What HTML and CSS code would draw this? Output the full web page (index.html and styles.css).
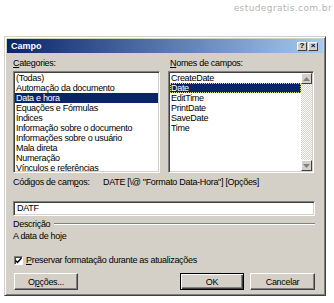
FILE: index.html
```html
<!DOCTYPE html>
<html lang="pt">
<head>
    <meta charset="UTF-8">
    <title>Campo</title>
    <link rel="stylesheet" href="styles.css">
</head>
<body>
    <div class="watermark">estudegratis.com.br</div>

    <div class="dialog">
        <div class="titlebar">
            <span class="title">Campo</span>
            <div class="title-buttons">
                <span class="tbtn">?</span>
                <span class="tbtn">&#215;</span>
            </div>
        </div>

        <div class="content">
            <div class="lists">
                <div class="col">
                    <div class="label"><u>C</u>ategories:</div>
                    <div class="listbox">
                        <div class="item">(Todas)</div>
                        <div class="item">Automação da documento</div>
                        <div class="item selected">Data e hora</div>
                        <div class="item">Equações e Fórmulas</div>
                        <div class="item">Índices</div>
                        <div class="item">Informação sobre o documento</div>
                        <div class="item">Informações sobre o usuário</div>
                        <div class="item">Mala direta</div>
                        <div class="item">Numeração</div>
                        <div class="item">Vínculos e referências</div>
                    </div>
                </div>
                <div class="col">
                    <div class="label label-right"><u>N</u>omes de campos:</div>
                    <div class="listbox listbox-scroll">
                        <div class="items">
                            <div class="item">CreateDate</div>
                            <div class="item selected focused">Date</div>
                            <div class="item">EditTime</div>
                            <div class="item">PrintDate</div>
                            <div class="item">SaveDate</div>
                            <div class="item">Time</div>
                        </div>
                        <div class="scrollbar">
                            <div class="arrow">
                                <svg width="7" height="4" viewBox="0 0 7 4"><path d="M3.5 0 L7 4 L0 4 Z" fill="#808080"/></svg>
                            </div>
                            <div class="track"></div>
                            <div class="arrow">
                                <svg width="7" height="4" viewBox="0 0 7 4"><path d="M0 0 L7 0 L3.5 4 Z" fill="#808080"/></svg>
                            </div>
                        </div>
                    </div>
                </div>
            </div>

            <div class="codes-row">
                <span class="codes-label">Códigos de cam<u>p</u>os:</span>
                <span class="codes-value">DATE [\@ "Formato Data-Hora"] [Opções]</span>
            </div>

            <div class="field">DATF</div>

            <div class="desc-head">
                <span>Descrição</span>
                <span class="rule"></span>
            </div>
            <div class="desc">A data de hoje</div>

            <div class="check-row">
                <span class="checkbox">
                    <svg width="7" height="7" viewBox="0 0 7 7"><path d="M0.5 3.5 L2.5 5.5 L6.5 1" fill="none" stroke="#000" stroke-width="1.5"/></svg>
                </span>
                <span><u>P</u>reservar formatação durante as atualizações</span>
            </div>

            <div class="buttons">
                <div class="btn">O<u>p</u>ções...</div>
                <div class="btn btn-default">OK</div>
                <div class="btn btn-wide">Cancelar</div>
            </div>
        </div>
    </div>
</body>
</html>
```

FILE: styles.css
```css
body {
    margin: 0;
    background: #fff;
    font-family: "Liberation Sans", Arial, sans-serif;
    font-size: 9px;
    color: #000;
}
.watermark {
    height: 14px;
    padding: 1px 2px 0 0;
    text-align: right;
    font-family: "DejaVu Sans", sans-serif;
    font-size: 9px;
    line-height: 14px;
    letter-spacing: 0.4px;
    color: #b4b4b4;
}
.dialog {
    width: 322px;
    margin: 21px 0 0 4px;
    padding: 2px;
    box-sizing: border-box;
    background: #d4d0c8;
    border: 1px solid;
    border-color: #d4d0c8 #404040 #404040 #d4d0c8;
    box-shadow: inset 1px 1px #fff, inset -1px -1px #808080;
}
.titlebar {
    height: 14px;
    display: flex;
    align-items: center;
    justify-content: space-between;
    padding: 0 5px 0 4px;
    background: linear-gradient(to right, #0a246a, #a6caf0);
}
.title {
    color: #fff;
    font-weight: bold;
    font-size: 9px;
}
.title-buttons {
    display: flex;
    gap: 1px;
}
.tbtn {
    width: 10px;
    height: 9px;
    box-sizing: border-box;
    display: flex;
    align-items: center;
    justify-content: center;
    background: #d4d0c8;
    border: 1px solid;
    border-color: #fff #404040 #404040 #fff;
    font-size: 8px;
    font-weight: bold;
    line-height: 1;
}
.content {
    padding: 5px 8px 3px 6px;
    letter-spacing: -0.3px;
}
.lists {
    display: grid;
    grid-template-columns: 147px 146px;
    column-gap: 8px;
}
.label {
    height: 10px;
    line-height: 10px;
}
.label-right {
    padding-left: 2px;
}
.listbox {
    height: 102px;
    margin-top: 3px;
    padding: 1px;
    box-sizing: border-box;
    background: #fff;
    border: 1px solid;
    border-color: #808080 #fff #fff #808080;
    box-shadow: inset 1px 1px #404040, inset -1px -1px #d4d0c8;
    overflow: hidden;
}
.listbox-scroll {
    display: flex;
}
.items {
    flex: 1;
}
.item {
    height: 10px;
    line-height: 10px;
    padding-left: 1px;
    white-space: nowrap;
}
.item.selected {
    background: #0a246a;
    color: #fff;
}
.item.focused {
    outline: 1px dotted #d8d890;
    outline-offset: -1px;
}
.scrollbar {
    width: 11px;
    display: flex;
    flex-direction: column;
}
.arrow {
    height: 11px;
    box-sizing: border-box;
    display: flex;
    align-items: center;
    justify-content: center;
    background: #d4d0c8;
    border: 1px solid;
    border-color: #fff #404040 #404040 #fff;
}
.track {
    flex: 1;
    background: repeating-conic-gradient(#fff 0 25%, #d4d0c8 0 50%) 0 0 / 2px 2px;
}
.codes-row {
    display: flex;
    height: 10px;
    line-height: 10px;
    margin-top: 4px;
}
.codes-label {
    width: 90px;
}
.field {
    height: 15px;
    margin-top: 14px;
    padding-left: 3px;
    box-sizing: border-box;
    background: #fff;
    border: 1px solid;
    border-color: #808080 #fff #fff #808080;
    box-shadow: inset 1px 1px #404040, inset -1px -1px #d4d0c8;
    line-height: 13px;
}
.desc-head {
    display: flex;
    align-items: center;
    gap: 4px;
    height: 10px;
    line-height: 10px;
    margin-top: 3px;
}
.rule {
    flex: 1;
    height: 0;
    border-top: 1px solid #808080;
    border-bottom: 1px solid #fff;
}
.desc {
    height: 10px;
    line-height: 10px;
    margin-top: 2px;
}
.check-row {
    display: flex;
    align-items: center;
    gap: 3px;
    height: 10px;
    margin-top: 14px;
    padding-left: 1px;
}
.checkbox {
    width: 9px;
    height: 9px;
    box-sizing: border-box;
    display: flex;
    align-items: center;
    justify-content: center;
    background: #fff;
    border: 1px solid;
    border-color: #808080 #fff #fff #808080;
    box-shadow: inset 1px 1px #404040;
}
.buttons {
    display: flex;
    gap: 6px;
    margin-top: 8px;
    padding-left: 1px;
}
.btn {
    width: 64px;
    height: 17px;
    box-sizing: border-box;
    display: flex;
    align-items: center;
    justify-content: center;
    background: #d4d0c8;
    border: 1px solid;
    border-color: #fff #404040 #404040 #fff;
    box-shadow: inset -1px -1px #808080;
}
.btn-default {
    margin-left: auto;
    border-color: #000;
    box-shadow: inset 1px 1px #fff, inset -1px -1px #404040, inset -2px -2px #808080;
}
.btn-wide {
    width: 65px;
}
```
